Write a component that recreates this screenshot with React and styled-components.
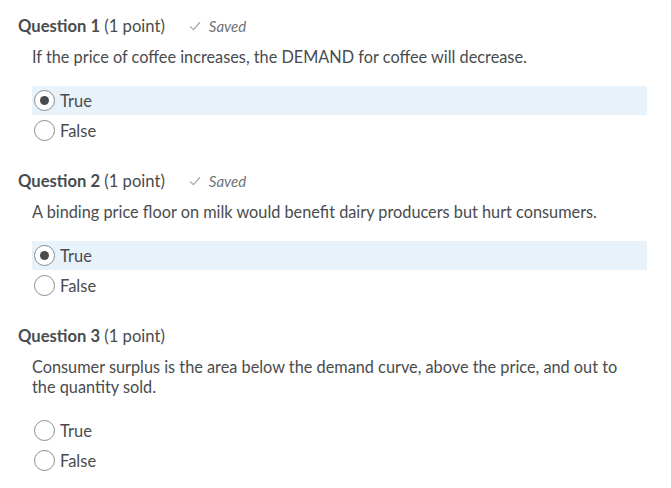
import React from "react";
import styled, { createGlobalStyle } from "styled-components";

const GlobalStyle = createGlobalStyle`
  html, body {
    margin: 0;
    padding: 0;
    background: #ffffff;
  }
  body {
    font-family: Lato, "Open Sans", sans-serif;
    color: #494c4e;
  }
`;

const questions = [
  {
    num: 1,
    text: "If the price of coffee increases, the DEMAND for coffee will decrease.",
    saved: true,
    answer: "True",
  },
  {
    num: 2,
    text: "A binding price floor on milk would benefit dairy producers but hurt consumers.",
    saved: true,
    answer: "True",
  },
  {
    num: 3,
    text: "Consumer surplus is the area below the demand curve, above the price, and out to the quantity sold.",
    saved: false,
    answer: null,
  },
];

export default function App() {
  return (
    <>
      <GlobalStyle />
      <Page>
        {questions.map((q) => (
          <Question key={q.num}>
            <Heading>
              <Title>
                <strong>Question {q.num}</strong> (1 point)
              </Title>
              {q.saved && (
                <Saved>
                  <svg width="12" height="10" viewBox="0 0 12 10">
                    <path
                      d="M1 5.4 L4.4 8.6 L11 1.2"
                      fill="none"
                      stroke="#a6a9ab"
                      strokeWidth="1.3"
                    />
                  </svg>
                  <span>Saved</span>
                </Saved>
              )}
            </Heading>
            <Prompt>{q.text}</Prompt>
            <Options>
              {["True", "False"].map((opt) => (
                <Option key={opt} $selected={q.answer === opt}>
                  <Radio $checked={q.answer === opt} />
                  <span>{opt}</span>
                </Option>
              ))}
            </Options>
          </Question>
        ))}
      </Page>
    </>
  );
}

const Page = styled.div`
  width: 671px;
  padding: 16px 24px 0 18px;
  box-sizing: border-box;
  display: flex;
  flex-direction: column;
  gap: 26px;
`;

const Question = styled.section`
  display: flex;
  flex-direction: column;
`;

const Heading = styled.div`
  display: flex;
  align-items: center;
  gap: 24px;
  height: 20px;
`;

const Title = styled.h2`
  margin: 0;
  font-size: 16.6px;
  font-weight: 400;
  line-height: 20px;
  color: #494c4e;
  strong {
    font-weight: 700;
  }
`;

const Saved = styled.div`
  display: flex;
  align-items: center;
  gap: 8px;
  font-size: 15px;
  font-style: italic;
  color: #6e7376;
`;

const Prompt = styled.p`
  margin: 11px 0 0 14px;
  font-size: 16.3px;
  line-height: 20px;
  max-width: 600px;
`;

const Options = styled.div`
  margin: 19px 0 0 14px;
  display: flex;
  flex-direction: column;
  gap: 1px;
`;

const Option = styled.label`
  display: flex;
  align-items: center;
  gap: 5px;
  height: 29px;
  padding-left: 2px;
  font-size: 16.5px;
  background: ${(p) => (p.$selected ? "#e8f2fb" : "transparent")};
`;

const Radio = styled.span`
  width: 19px;
  height: 19px;
  border-radius: 50%;
  border: 1px solid #868c8f;
  background: #fff;
  display: flex;
  align-items: center;
  justify-content: center;
  &::after {
    content: "";
    display: ${(p) => (p.$checked ? "block" : "none")};
    width: 9px;
    height: 9px;
    border-radius: 50%;
    background: #494c4e;
  }
`;
